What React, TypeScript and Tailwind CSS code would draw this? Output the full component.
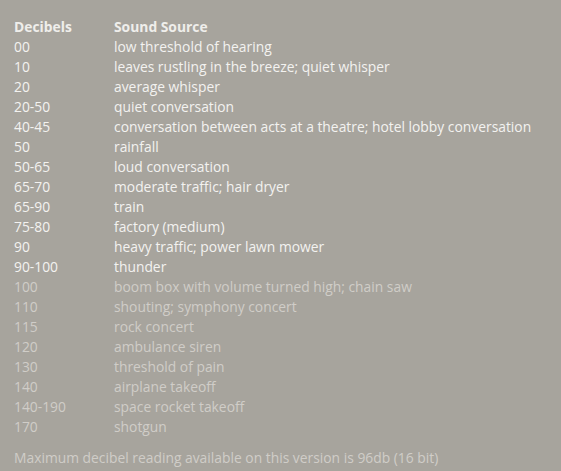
const rows: [string, string][] = [
  ["00", "low threshold of hearing"],
  ["10", "leaves rustling in the breeze; quiet whisper"],
  ["20", "average whisper"],
  ["20-50", "quiet conversation"],
  ["40-45", "conversation between acts at a theatre; hotel lobby conversation"],
  ["50", "rainfall"],
  ["50-65", "loud conversation"],
  ["65-70", "moderate traffic; hair dryer"],
  ["65-90", "train"],
  ["75-80", "factory (medium)"],
  ["90", "heavy traffic; power lawn mower"],
  ["90-100", "thunder"],
  ["100", "boom box with volume turned high; chain saw"],
  ["110", "shouting; symphony concert"],
  ["115", "rock concert"],
  ["120", "ambulance siren"],
  ["130", "threshold of pain"],
  ["140", "airplane takeoff"],
  ["140-190", "space rocket takeoff"],
  ["170", "shotgun"],
];

export default function App() {
  return (
    <div
      className="w-[561px] h-[471px] bg-[#a7a49d] pl-[14px] pt-[17px] text-[13.85px] leading-[20px] overflow-hidden"
      style={{ fontFamily: '"Open Sans", "Noto Sans", sans-serif' }}
    >
      <div className="flex font-bold text-[#efeeeb]">
        <div className="w-[100px]">Decibels</div>
        <div>Sound Source</div>
      </div>
      {rows.map(([db, src], i) => (
        <div
          key={db + src}
          className={`flex ${i < 12 ? "text-[#f3f2f0]" : "text-[#d0cdc8]"}`}
        >
          <div className="w-[100px]">{db}</div>
          <div className="whitespace-nowrap">{src}</div>
        </div>
      ))}
      <p className="mt-[11px] text-[#d0cdc8]">
        Maximum decibel reading available on this version is 96db (16 bit)
      </p>
    </div>
  );
}
